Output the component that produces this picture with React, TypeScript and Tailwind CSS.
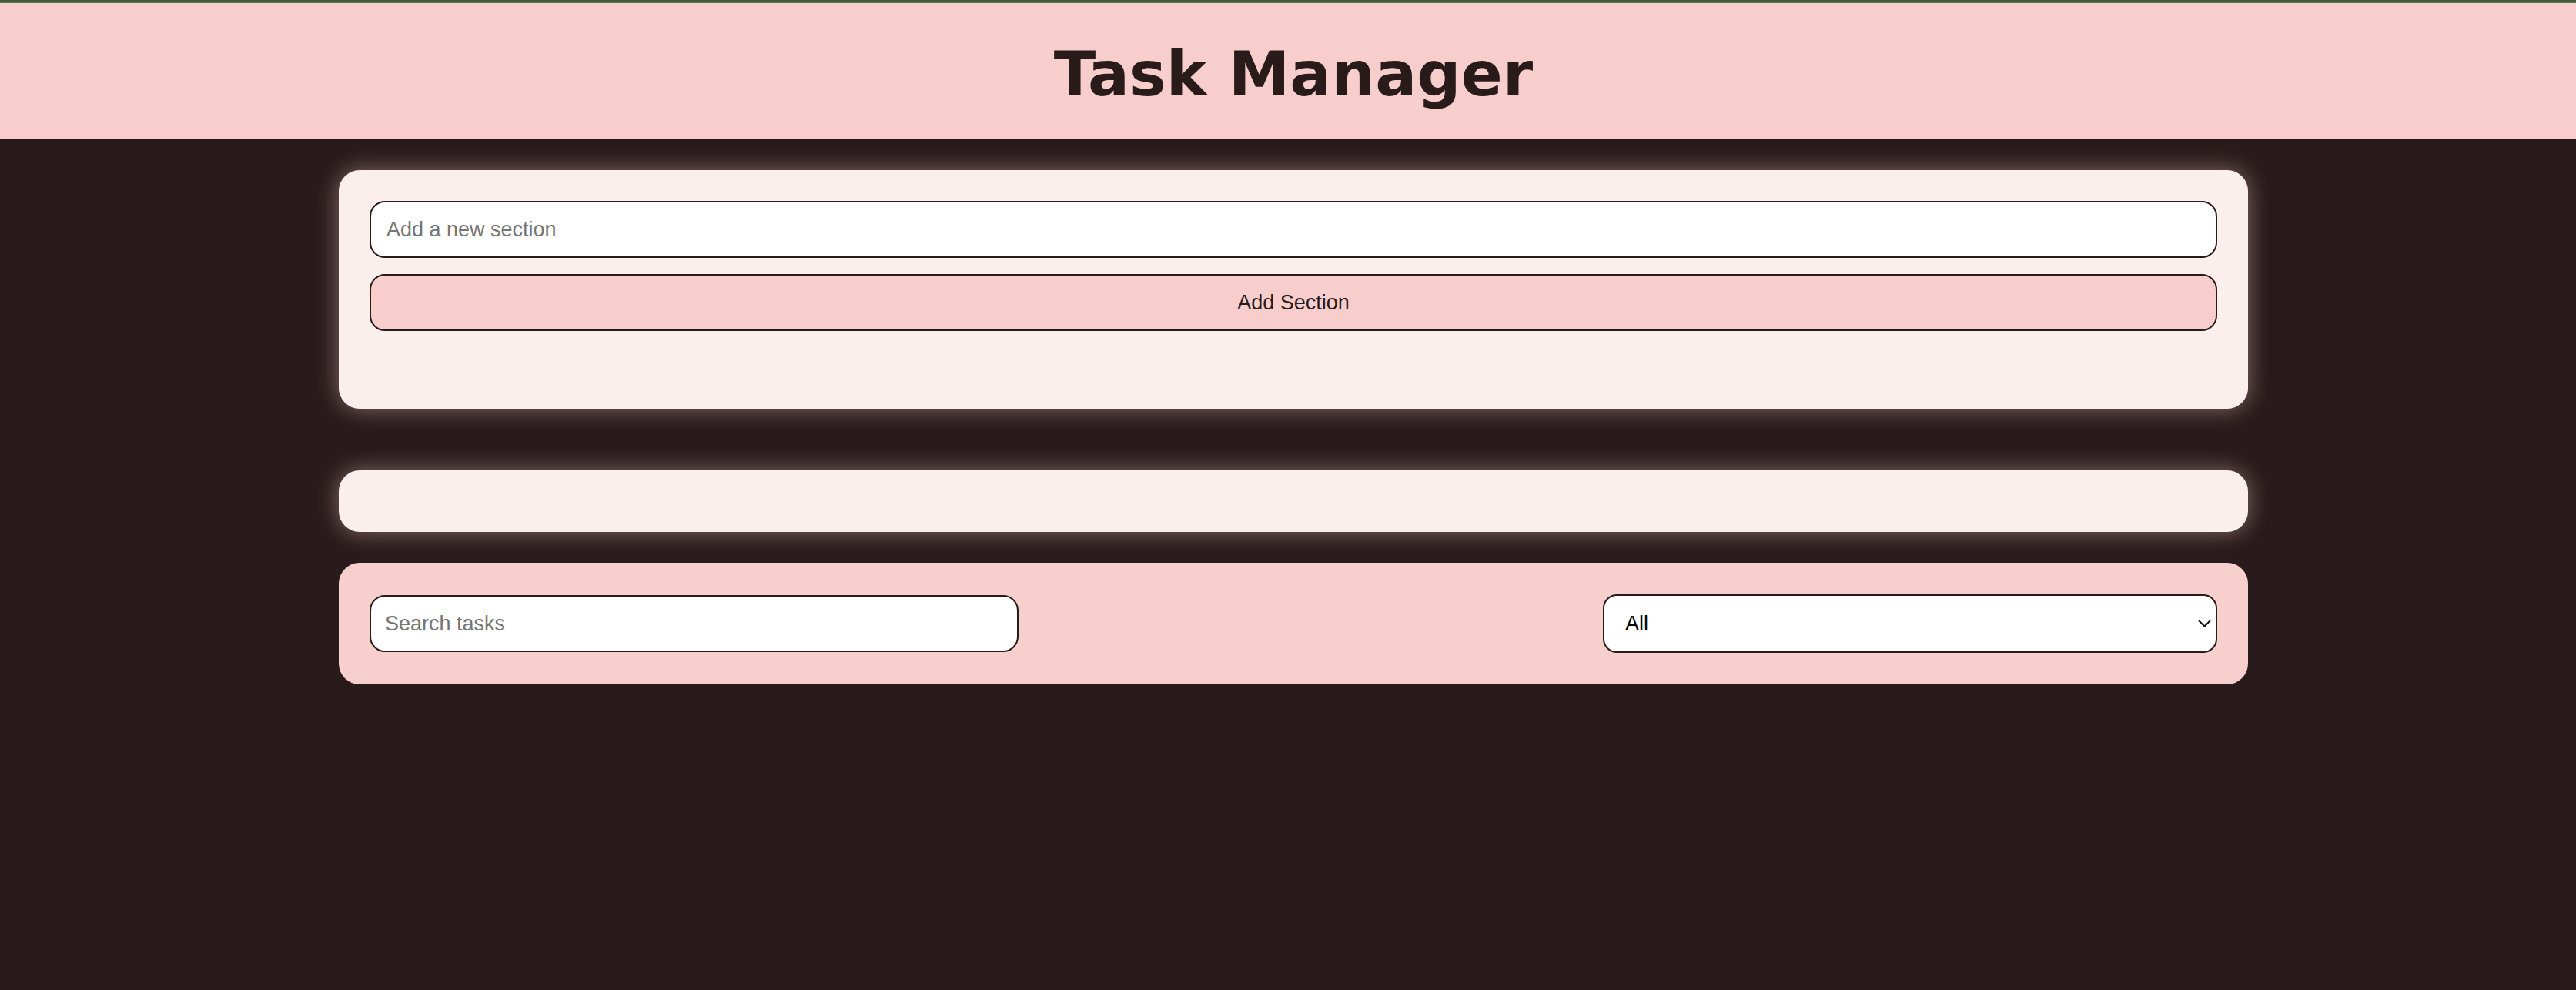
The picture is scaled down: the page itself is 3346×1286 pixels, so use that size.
import React from "react";

export default function App() {
  return (
    <div className="min-h-screen bg-[#291b1b] font-['Liberation_Sans',Arial,sans-serif]">
      <div className="h-[3px] bg-[#3d5c39]" />
      <div className="h-[1px] bg-[#5f7b5b]" />
      <header className="h-[177px] bg-[#f7cecc] flex items-center justify-center pt-[8px] pl-[14px]">
        <h1 className="text-[80px] font-bold leading-normal text-[#2a1b1b] font-['DejaVu_Sans',Verdana,sans-serif]">
          Task Manager
        </h1>
      </header>
      <div className="pl-[14px]">
        <main className="w-[2480px] mx-auto pt-[40px] flex flex-col">
          <section className="rounded-[27px] bg-[#fbefee] pt-[40px] px-[40px] pb-[101px] shadow-[0_0_30px_rgba(247,206,204,0.45)] flex flex-col">
            <input
              type="text"
              placeholder="Add a new section"
              className="h-[74px] w-full rounded-[20px] border-2 border-[#2a1b1b] bg-white px-[20px] text-[27px] text-black placeholder:text-[#757575] outline-none"
            />
            <button className="mt-[21px] h-[74px] w-full rounded-[20px] border-2 border-[#2a1b1b] bg-[#f7cecc] text-[27px] text-[#2a1b1b]">
              Add Section
            </button>
          </section>
          <section className="mt-[80px] h-[80px] rounded-[27px] bg-[#fbefee] shadow-[0_0_30px_rgba(247,206,204,0.45)]" />
          <section className="mt-[40px] h-[158px] rounded-[27px] bg-[#f7cfcd] px-[40px] flex items-center justify-between">
            <input
              type="text"
              placeholder="Search tasks"
              className="h-[74px] w-[843px] rounded-[20px] border-2 border-[#2a1b1b] bg-white px-[18px] text-[27px] text-black placeholder:text-[#757575] outline-none"
            />
            <div className="relative w-[798px] h-[76px]">
              <select className="appearance-none h-full w-full rounded-[18px] border-2 border-[#2a1b1b] bg-white pl-[27px] pr-[40px] text-[27px] text-black outline-none">
                <option>All</option>
                <option>Completed</option>
                <option>Pending</option>
              </select>
              <svg
                className="absolute right-[8px] top-[33px] pointer-events-none"
                width="17"
                height="10"
                viewBox="0 0 17 10"
              >
                <polyline points="1,1 8.5,8.5 16,1" fill="none" stroke="#111" strokeWidth="2" />
              </svg>
            </div>
          </section>
        </main>
      </div>
    </div>
  );
}
